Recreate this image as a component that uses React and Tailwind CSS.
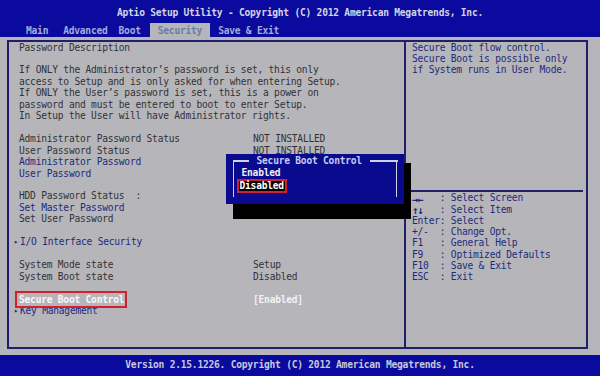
import React from "react";

function Row({ label, value, className = "", valueClass = "" }) {
  return (
    <div className="flex h-[11.46px] items-center whitespace-pre">
      <span className={"w-[234px] shrink-0 " + className}>{label}</span>
      {value ? <span className={valueClass}>{value}</span> : null}
    </div>
  );
}

function Blank() {
  return <div className="h-[11.46px]" />;
}

function Line({ children, className = "" }) {
  return (
    <div className={"flex h-[11.46px] items-center whitespace-pre " + className}>{children}</div>
  );
}

function Sub({ children }) {
  return (
    <div className="flex h-[11.46px] items-center whitespace-pre text-[#1c2a7c]">
      <span className="-ml-[5px] w-[5px] text-[7px] leading-none">▸</span>
      <span className="ml-[1px]">{children}</span>
    </div>
  );
}

export default function App() {
  const keys = [
    ["→←", "Select Screen", true],
    ["↑↓", "Select Item", true],
    ["Enter", "Select", false],
    ["+/-", "Change Opt.", false],
    ["F1", "General Help", false],
    ["F9", "Optimized Defaults", false],
    ["F10", "Save & Exit", false],
    ["ESC", "Exit", false],
  ];
  return (
    <div className="relative flex h-[376px] w-[600px] flex-col overflow-hidden font-['DejaVu_Sans_Mono',monospace] text-[9.6px] tracking-[-0.23px] text-[#323236]">
      {/* header */}
      <div className="flex h-[37px] flex-col bg-[#0a0a9e]">
        <div className="flex h-[23px] items-center justify-center pt-[3px] font-bold leading-[14px] text-[#d4d4e6]">
          Aptio Setup Utility - Copyright (C) 2012 American Megatrends, Inc.
        </div>
        <div className="flex h-[14px] items-stretch font-bold leading-[13px] text-[#a4acdc]">
          <span className="ml-[26px] flex items-center">Main</span>
          <span className="ml-[15px] flex items-center">Advanced</span>
          <span className="ml-[11px] flex items-center">Boot</span>
          <span className="ml-[9px] flex items-center bg-[#b6b6ba] px-[8px] text-[#6c7aa8]">Security</span>
          <span className="ml-[8px] flex items-center">Save &amp; Exit</span>
        </div>
      </div>

      {/* body */}
      <div className="h-[318px] bg-[#b6b6ba] pb-[6px] pl-[7px] pr-[12px] pt-[3px]">
        <div className="flex h-full border-2 border-[#20206a]">
          {/* left panel */}
          <div className="w-[395px] shrink-0 pl-[10px]">
            <Line>Password Description</Line>
            <Blank />
            <Line>If ONLY the Administrator’s password is set, this only</Line>
            <Line>access to Setup and is only asked for when entering Setup.</Line>
            <Line>If ONLY the User’s password is set, this is a power on</Line>
            <Line>password and must be entered to boot to enter Setup.</Line>
            <Line>In Setup the User will have Administrator rights.</Line>
            <Blank />
            <Row label="Administrator Password Status" value="NOT INSTALLED" />
            <Row label="User Password Status" value="NOT INSTALLED" />
            <Line className="text-[#1c2a7c]">Administrator Password</Line>
            <Line className="text-[#1c2a7c]">User Password</Line>
            <Blank />
            <Line>HDD Password Status  :</Line>
            <Line className="text-[#1c2a7c]">Set Master Password</Line>
            <Line>Set User Password</Line>
            <Blank />
            <Sub>I/O Interface Security</Sub>
            <Blank />
            <Row label="System Mode state" value="Setup" />
            <Row label="System Boot state" value="Disabled" />
            <Blank />
            <div className="flex h-[11.46px] items-center whitespace-pre">
              <span className="w-[234px] shrink-0">
                <span className="relative font-bold text-[#f6f6f8]">
                  Secure Boot Control
                  <span className="absolute -bottom-[3px] -left-[4px] -right-[3px] -top-[3px] border-2 border-[#d2202e]" />
                </span>
              </span>
              <span className="font-bold text-[#f2f2f4]">[Enabled]</span>
            </div>
            <Sub>Key Management</Sub>
          </div>

          {/* divider */}
          <div className="w-[2px] shrink-0 bg-[#20206a]" />

          {/* right panel */}
          <div className="flex flex-1 flex-col text-[#1c2a7c]">
            <div className="h-[148px] pl-[6px]">
              <Line>Secure Boot flow control.</Line>
              <Line>Secure Boot is possible only</Line>
              <Line>if System runs in User Mode.</Line>
            </div>
            <div className="mr-[3px] h-[2px] bg-[#20206a]" />
            <div className="pl-[6px] pt-[1px]">
              {keys.map(([k, v, bold]) => (
                <div key={k} className="flex h-[11.25px] items-center whitespace-pre">
                  <span
                    className={
                      "w-[27.75px] shrink-0 " +
                      (bold ? "text-[10.5px] font-bold leading-[10px] tracking-[-1px]" : "")
                    }
                  >
                    {k}
                  </span>
                  <span>{": " + v}</span>
                </div>
              ))}
            </div>
          </div>
        </div>
      </div>

      {/* footer */}
      <div className="flex h-[21px] items-center justify-center bg-[#0a0a9e] font-bold text-[#c8c8dc]">
        Version 2.15.1226. Copyright (C) 2012 American Megatrends, Inc.
      </div>

      {/* popup shadow */}
      <div className="absolute left-[233px] top-[163px] h-[56px] w-[178px] bg-black" />
      {/* popup */}
      <div className="absolute left-[226px] top-[154px] h-[50px] w-[178px] bg-[#0a0a8e]">
        <div className="absolute left-[7px] top-[7px] h-[36px] w-[164px] border-x-[1.5px] border-[#cfd0e6]">
          <div className="absolute -left-[1.5px] -right-[1.5px] -top-[6px] flex h-[12px] items-center">
            <div className="h-[1.5px] w-[16px] bg-[#cfd0e6]" />
            <span className="px-[8px] font-bold leading-[12px] text-[#c4ccf2]">Secure Boot Control</span>
            <div className="h-[1.5px] flex-1 bg-[#cfd0e6]" />
          </div>
          <div className="pl-[2.5px] pt-[7px] font-bold text-[#eeeef4]">
            <div className="flex h-[10.5px] items-center pl-[5px] leading-[10px]">Enabled</div>
            <div className="inline-flex h-[14px] items-center border-2 border-[#d2202e] bg-black px-[1px] leading-[10px] text-white">
              Disabled
            </div>
          </div>
        </div>
      </div>
    </div>
  );
}
